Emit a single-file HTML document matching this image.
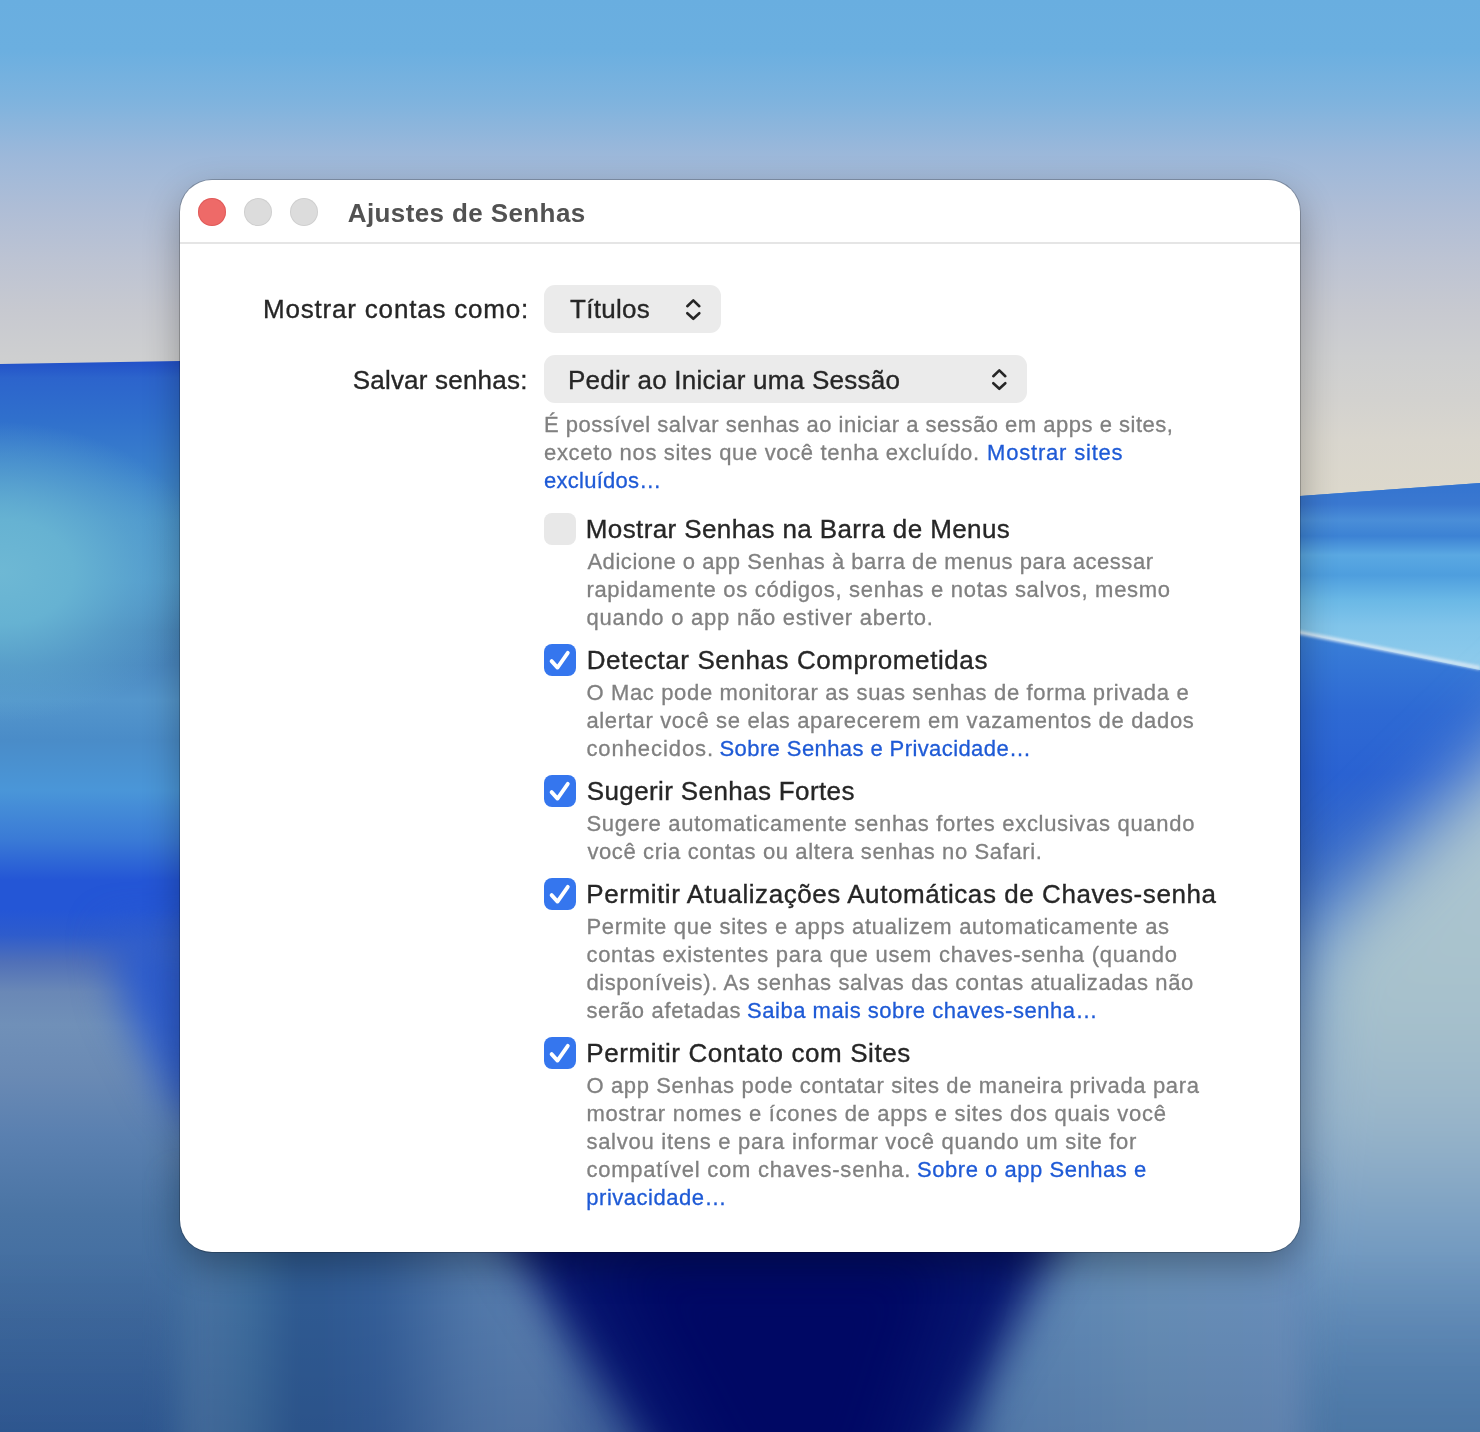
<!DOCTYPE html>
<html><head><meta charset="utf-8">
<style>
*{margin:0;padding:0;box-sizing:border-box}
html,body{width:1480px;height:1432px;overflow:hidden}
body{position:relative;font-family:"Liberation Sans",sans-serif;background:#4a78b0}
.t{position:absolute;white-space:nowrap}
.L{position:absolute;left:0;top:0;width:1480px;height:1432px}
</style></head><body>
<div id="bg" style="position:absolute;left:0;top:0;width:1480px;height:1432px;overflow:hidden">
<div class="L" style="background:linear-gradient(180deg,#69aee0 0px,#6bafe0 50px,#7eb3de 100px,#9cb8da 155px,#aebdd6 207px,#bcc3d3 258px,#c7c9d0 310px,#cecfd0 357px,#d3d2cf 400px,#d9d6ce 440px,#dcd8cc 490px);"></div>
<div class="L" style="clip-path:polygon(0px 364px,180px 361px,600px 358px,600px 1432px,0px 1432px);background:linear-gradient(180deg,#2250c8 361px,#2c64cc 378px,#3070cc 420px,#3a80cc 470px,#4892cc 520px,#4e96cc 580px,#4886bc 630px,#4a88c0 665px,#5496cc 700px,#4a8cc8 740px,#4a96d8 790px,#3a7ad6 840px,#2456d6 880px,#2456d6 910px,#2e5ccc 935px,#5070b8 962px,#6a88b6 992px,#7090b8 1025px,#6a8ab4 1075px,#5a80b0 1135px,#4a74a4 1215px,#3f6a9e 1315px,#33609a 1432px);"></div>
<div class="L" style="clip-path:polygon(0px 364px,180px 361px,600px 358px,600px 1432px,0px 1432px);background:radial-gradient(210px 150px at 0px 572px,#6eb8d4 0%,#66b2d2 35%,rgba(96,170,208,0.6) 65%,rgba(96,170,208,0) 100%);"></div>
<div class="L" style="clip-path:polygon(1200px 505px,1300px 496px,1480px 483px,1480px 1432px,1200px 1432px);background:linear-gradient(180deg,#3a80d8 630px,#2e6ad4 710px,#2a62d2 774px,#3468c8 870px,#3a70c8 990px,#5a80b8 1110px,#4a78a8 1432px);"></div>
<div class="L" style="clip-path:polygon(1200px 505px,1300px 496px,1480px 483px,1480px 670px,1300px 633px,1200px 614px);background:linear-gradient(180deg,#3474d0 483px,#3a78d0 504px,#4a8ed8 520px,#3c82d4 536px,#5aa8e2 555px,#4e9ede 575px,#6ab8e6 600px,#80c4ea 625px,#90ccec 670px);"></div>
<div class="L" style="filter:blur(1.5px);"><div style="position:absolute;left:-150px;top:-150px;width:1780px;height:1732px;clip-path:polygon(1350px 761px,1630px 816px,1630px 820px,1350px 765px);background:#d4e6f4"></div></div>
<div class="L" style="filter:blur(38px);"><div style="position:absolute;left:-150px;top:-150px;width:1780px;height:1732px;clip-path:polygon(1850px 710px,1630px 920px,1450px 1095px,1390px 1750px,1850px 1750px);background:linear-gradient(180deg,#b0c8d4 850px,#a8c2cc 1150px,#9ab6ca 1270px,#7098c0 1412px,#5a88b6 1515px,#5484b2 1582px)"></div></div>
<div class="L" style="filter:blur(14px);"><div style="position:absolute;left:-150px;top:-150px;width:1780px;height:1732px;clip-path:polygon(325px 1330px,1455px 1330px,1455px 1750px,325px 1750px);background:linear-gradient(90deg,#3a6699 150px,#3e6a9c 270px,#4270a0 330px,#4a74a4 350px,#4070a0 395px,#2e5a92 450px,#35609a 530px,#527aac 620px,#5a80b0 683px,#4a70a8 742px,#3a62a0 1112px,#5a85b5 1150px,#6890b8 1300px,#6a90bc 1450px,#6a90bc 1630px)"></div></div>
<div class="L" style="clip-path:polygon(0px 1252px,1480px 1252px,1480px 1432px,0px 1432px);background:linear-gradient(180deg,rgba(0,0,32,0) 1252px,rgba(0,0,48,0.10) 1432px);"></div>
<div class="L" style="filter:blur(22px);"><div style="position:absolute;left:-150px;top:-150px;width:1780px;height:1732px;clip-path:polygon(620px 1330px,1240px 1330px,1060px 1670px,840px 1670px);background:#06146e"></div></div>
<div class="L" style="filter:blur(30px);"><div style="position:absolute;left:-150px;top:-150px;width:1780px;height:1732px;clip-path:polygon(750px 1400px,1100px 1400px,1020px 1650px,880px 1650px);background:#000864"></div></div>
<div class="L" style="filter:blur(20px);"><div style="position:absolute;left:-150px;top:-150px;width:1780px;height:1732px;clip-path:polygon(260px 1080px,370px 1080px,370px 1290px,320px 1250px,270px 1150px);background:#2d5ccc"></div></div>
</div>
<div style="position:absolute;left:180px;top:180px;width:1120px;height:1072px;background:#fff;border-radius:32px;box-shadow:0 0 0 1px rgba(0,0,0,0.22),0 14px 36px rgba(0,0,0,0.3)"></div>
<div style="position:absolute;left:198px;top:198px;width:28px;height:28px;border-radius:50%;background:#ee6a68;box-shadow:inset 0 0 0 1px rgba(200,60,60,0.35)"></div>
<div style="position:absolute;left:244px;top:198px;width:28px;height:28px;border-radius:50%;background:#dcdcdc;box-shadow:inset 0 0 0 1px rgba(0,0,0,0.06)"></div>
<div style="position:absolute;left:290px;top:198px;width:28px;height:28px;border-radius:50%;background:#dcdcdc;box-shadow:inset 0 0 0 1px rgba(0,0,0,0.06)"></div>
<div style="position:absolute;left:180px;top:242px;width:1120px;height:2px;background:#e5e5e5"></div>
<div style="position:absolute;left:544px;top:285px;width:177px;height:48px;border-radius:11px;background:#ebebeb"></div>
<div style="position:absolute;left:544px;top:355px;width:483px;height:48px;border-radius:11px;background:#ebebeb"></div>
<svg style="position:absolute;left:680px;top:295px" width="26" height="28" viewBox="0 0 26 28"><path d="M7.3 11.2 L13.3 5.4 L19.3 11.2 M7.3 18.2 L13.3 23.8 L19.3 18.2" fill="none" stroke="#262626" stroke-width="2.6" stroke-linecap="round" stroke-linejoin="round"/></svg>
<svg style="position:absolute;left:986px;top:365px" width="26" height="28" viewBox="0 0 26 28"><path d="M7.3 11.2 L13.3 5.4 L19.3 11.2 M7.3 18.2 L13.3 23.8 L19.3 18.2" fill="none" stroke="#262626" stroke-width="2.6" stroke-linecap="round" stroke-linejoin="round"/></svg>
<div style="position:absolute;left:544px;top:513px;width:32px;height:32px;border-radius:8px;background:#e8e8e8"></div>
<div style="position:absolute;left:544px;top:644px;width:32px;height:32px;border-radius:8px;background:#3576ee"><svg width="32" height="32" viewBox="0 0 32 32"><path d="M7.6 17.1 L13.5 23.6 L23.8 8.8" fill="none" stroke="#fff" stroke-width="3.8" stroke-linecap="round" stroke-linejoin="round"/></svg></div>
<div style="position:absolute;left:544px;top:775px;width:32px;height:32px;border-radius:8px;background:#3576ee"><svg width="32" height="32" viewBox="0 0 32 32"><path d="M7.6 17.1 L13.5 23.6 L23.8 8.8" fill="none" stroke="#fff" stroke-width="3.8" stroke-linecap="round" stroke-linejoin="round"/></svg></div>
<div style="position:absolute;left:544px;top:878px;width:32px;height:32px;border-radius:8px;background:#3576ee"><svg width="32" height="32" viewBox="0 0 32 32"><path d="M7.6 17.1 L13.5 23.6 L23.8 8.8" fill="none" stroke="#fff" stroke-width="3.8" stroke-linecap="round" stroke-linejoin="round"/></svg></div>
<div style="position:absolute;left:544px;top:1037px;width:32px;height:32px;border-radius:8px;background:#3576ee"><svg width="32" height="32" viewBox="0 0 32 32"><path d="M7.6 17.1 L13.5 23.6 L23.8 8.8" fill="none" stroke="#fff" stroke-width="3.8" stroke-linecap="round" stroke-linejoin="round"/></svg></div>

<div class="t" style="left:347.80px;top:197.20px;font-size:26px;line-height:32px;letter-spacing:0.387px;color:#525252;-webkit-text-stroke:0px #525252;font-weight:bold;">Ajustes de Senhas</div>
<div class="t" style="left:263.00px;top:292.50px;font-size:26px;line-height:32px;letter-spacing:0.808px;color:#262626;-webkit-text-stroke:0.35px #262626;">Mostrar contas como:</div>
<div class="t" style="left:352.70px;top:363.50px;font-size:26px;line-height:32px;letter-spacing:0.206px;color:#262626;-webkit-text-stroke:0.35px #262626;">Salvar senhas:</div>
<div class="t" style="left:570.00px;top:292.50px;font-size:26px;line-height:32px;letter-spacing:0.297px;color:#262626;-webkit-text-stroke:0.35px #262626;">Títulos</div>
<div class="t" style="left:567.90px;top:363.50px;font-size:26px;line-height:32px;letter-spacing:0.265px;color:#262626;-webkit-text-stroke:0.35px #262626;">Pedir ao Iniciar uma Sessão</div>
<div class="t" style="left:544.00px;top:411.00px;font-size:22px;line-height:28px;letter-spacing:0.517px;color:#808080;-webkit-text-stroke:0.3px #808080;">É possível salvar senhas ao iniciar a sessão em apps e sites,</div>
<div class="t" style="left:544.00px;top:439.00px;font-size:22px;line-height:28px;letter-spacing:0.665px;color:#808080;-webkit-text-stroke:0.3px #808080;">exceto nos sites que você tenha excluído.</div>
<div class="t" style="left:987.00px;top:439.00px;font-size:22px;line-height:28px;letter-spacing:0.808px;color:#1e5ad6;-webkit-text-stroke:0.3px #1e5ad6;">Mostrar sites</div>
<div class="t" style="left:544.00px;top:467.00px;font-size:22px;line-height:28px;letter-spacing:0.267px;color:#1e5ad6;-webkit-text-stroke:0.3px #1e5ad6;">excluídos…</div>
<div class="t" style="left:585.80px;top:512.80px;font-size:26px;line-height:32px;letter-spacing:0.390px;color:#262626;-webkit-text-stroke:0.35px #262626;">Mostrar Senhas na Barra de Menus</div>
<div class="t" style="left:587.40px;top:547.90px;font-size:22px;line-height:28px;letter-spacing:0.550px;color:#808080;-webkit-text-stroke:0.3px #808080;">Adicione o app Senhas à barra de menus para acessar</div>
<div class="t" style="left:586.40px;top:575.90px;font-size:22px;line-height:28px;letter-spacing:0.702px;color:#808080;-webkit-text-stroke:0.3px #808080;">rapidamente os códigos, senhas e notas salvos, mesmo</div>
<div class="t" style="left:586.40px;top:603.90px;font-size:22px;line-height:28px;letter-spacing:0.761px;color:#808080;-webkit-text-stroke:0.3px #808080;">quando o app não estiver aberto.</div>
<div class="t" style="left:586.70px;top:643.60px;font-size:26px;line-height:32px;letter-spacing:0.582px;color:#262626;-webkit-text-stroke:0.35px #262626;">Detectar Senhas Comprometidas</div>
<div class="t" style="left:586.40px;top:678.70px;font-size:22px;line-height:28px;letter-spacing:0.657px;color:#808080;-webkit-text-stroke:0.3px #808080;">O Mac pode monitorar as suas senhas de forma privada e</div>
<div class="t" style="left:586.40px;top:706.70px;font-size:22px;line-height:28px;letter-spacing:0.662px;color:#808080;-webkit-text-stroke:0.3px #808080;">alertar você se elas aparecerem em vazamentos de dados</div>
<div class="t" style="left:586.40px;top:734.70px;font-size:22px;line-height:28px;letter-spacing:0.930px;color:#808080;-webkit-text-stroke:0.3px #808080;">conhecidos.</div>
<div class="t" style="left:719.50px;top:734.70px;font-size:22px;line-height:28px;letter-spacing:0.412px;color:#1e5ad6;-webkit-text-stroke:0.3px #1e5ad6;">Sobre Senhas e Privacidade…</div>
<div class="t" style="left:586.80px;top:774.60px;font-size:26px;line-height:32px;letter-spacing:0.375px;color:#262626;-webkit-text-stroke:0.35px #262626;">Sugerir Senhas Fortes</div>
<div class="t" style="left:586.40px;top:810.10px;font-size:22px;line-height:28px;letter-spacing:0.696px;color:#808080;-webkit-text-stroke:0.3px #808080;">Sugere automaticamente senhas fortes exclusivas quando</div>
<div class="t" style="left:587.40px;top:838.10px;font-size:22px;line-height:28px;letter-spacing:0.614px;color:#808080;-webkit-text-stroke:0.3px #808080;">você cria contas ou altera senhas no Safari.</div>
<div class="t" style="left:586.30px;top:877.60px;font-size:26px;line-height:32px;letter-spacing:0.562px;color:#262626;-webkit-text-stroke:0.35px #262626;">Permitir Atualizações Automáticas de Chaves-senha</div>
<div class="t" style="left:586.40px;top:913.10px;font-size:22px;line-height:28px;letter-spacing:0.694px;color:#808080;-webkit-text-stroke:0.3px #808080;">Permite que sites e apps atualizem automaticamente as</div>
<div class="t" style="left:586.40px;top:941.10px;font-size:22px;line-height:28px;letter-spacing:0.739px;color:#808080;-webkit-text-stroke:0.3px #808080;">contas existentes para que usem chaves-senha (quando</div>
<div class="t" style="left:586.40px;top:969.10px;font-size:22px;line-height:28px;letter-spacing:0.616px;color:#808080;-webkit-text-stroke:0.3px #808080;">disponíveis). As senhas salvas das contas atualizadas não</div>
<div class="t" style="left:586.40px;top:997.10px;font-size:22px;line-height:28px;letter-spacing:0.662px;color:#808080;-webkit-text-stroke:0.3px #808080;">serão afetadas</div>
<div class="t" style="left:747.00px;top:997.10px;font-size:22px;line-height:28px;letter-spacing:0.534px;color:#1e5ad6;-webkit-text-stroke:0.3px #1e5ad6;">Saiba mais sobre chaves-senha…</div>
<div class="t" style="left:586.30px;top:1037.20px;font-size:26px;line-height:32px;letter-spacing:0.592px;color:#262626;-webkit-text-stroke:0.35px #262626;">Permitir Contato com Sites</div>
<div class="t" style="left:586.40px;top:1072.20px;font-size:22px;line-height:28px;letter-spacing:0.642px;color:#808080;-webkit-text-stroke:0.3px #808080;">O app Senhas pode contatar sites de maneira privada para</div>
<div class="t" style="left:586.40px;top:1100.20px;font-size:22px;line-height:28px;letter-spacing:0.704px;color:#808080;-webkit-text-stroke:0.3px #808080;">mostrar nomes e ícones de apps e sites dos quais você</div>
<div class="t" style="left:586.40px;top:1128.20px;font-size:22px;line-height:28px;letter-spacing:0.737px;color:#808080;-webkit-text-stroke:0.3px #808080;">salvou itens e para informar você quando um site for</div>
<div class="t" style="left:586.40px;top:1156.20px;font-size:22px;line-height:28px;letter-spacing:0.763px;color:#808080;-webkit-text-stroke:0.3px #808080;">compatível com chaves-senha.</div>
<div class="t" style="left:917.00px;top:1156.20px;font-size:22px;line-height:28px;letter-spacing:0.542px;color:#1e5ad6;-webkit-text-stroke:0.3px #1e5ad6;">Sobre o app Senhas e</div>
<div class="t" style="left:586.30px;top:1184.20px;font-size:22px;line-height:28px;letter-spacing:0.518px;color:#1e5ad6;-webkit-text-stroke:0.3px #1e5ad6;">privacidade…</div>
</body></html>
